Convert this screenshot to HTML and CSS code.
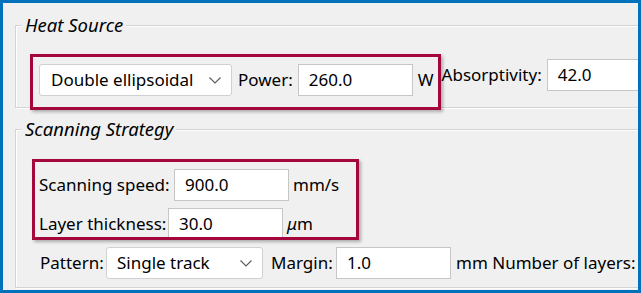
FILE: index.html
```html
<!DOCTYPE html>
<html>
<head>
<meta charset="utf-8">
<link rel="stylesheet" href="styles.css">
</head>
<body>
<div class="frame">
  <div class="group g1">
    <div class="legend">Heat Source</div>
    <div class="row">
      <div class="mark m1">
        <div class="combo c1"><span>Double ellipsoidal</span><svg class="chev" width="12" height="7" viewBox="0 0 12 7"><polyline points="0.5,0.5 6,6 11.5,0.5" fill="none" stroke="#5a5a5a" stroke-width="1.1"/></svg></div>
        <span class="lbl l-power">Power:</span>
        <div class="field f115">260.0</div>
        <span class="lbl l-w">W</span>
      </div>
      <span class="lbl l-abs">Absorptivity:</span>
      <div class="field f-abs">42.0</div>
    </div>
  </div>
  <div class="group g2">
    <div class="legend">Scanning Strategy</div>
    <div class="mark m2">
      <div class="row r-speed">
        <span class="lbl l-speed">Scanning speed:</span>
        <div class="field f115">900.0</div>
        <span class="lbl l-unit">mm/s</span>
      </div>
      <div class="row r-layer">
        <span class="lbl l-layer">Layer thickness:</span>
        <div class="field f115">30.0</div>
        <span class="lbl l-unit"><i>μ</i>m</span>
      </div>
    </div>
    <div class="row r-pattern">
      <span class="lbl l-pattern">Pattern:</span>
      <div class="combo c2"><span>Single track</span><svg class="chev" width="12" height="7" viewBox="0 0 12 7"><polyline points="0.5,0.5 6,6 11.5,0.5" fill="none" stroke="#5a5a5a" stroke-width="1.1"/></svg></div>
      <span class="lbl l-margin">Margin:</span>
      <div class="field f115">1.0</div>
      <span class="lbl l-unit2">mm Number of layers:</span>
    </div>
  </div>
</div>
</body>
</html>
```
FILE: styles.css
```css
html, body {
  margin: 0;
  padding: 0;
  background: #f0f0f0;
}
body {
  font-family: "Noto Sans", "Open Sans", sans-serif;
  font-size: 17px;
  color: #000;
}
.frame {
  box-sizing: border-box;
  width: 641px;
  height: 293px;
  border: 3px solid #0072bc;
  background: #f0f0f0;
  overflow: hidden;
}
.group {
  box-sizing: border-box;
  width: 700px;
  margin-left: 12px;
  border: 1px solid #d4d4d4;
  box-shadow: inset 1px 1px 0 #fff, 1px 1px 0 #fff;
}
.g1 {
  margin-top: 22px;
  height: 83px;
}
.g2 {
  margin-top: 21px;
  height: 159px;
}
.legend {
  display: inline-block;
  font-style: italic;
  font-size: 18.5px;
  height: 24px;
  line-height: 24px;
  margin-top: -13px;
  margin-left: 6px;
  padding: 0 3px;
  background: #f0f0f0;
  vertical-align: top;
}
.row {
  display: flex;
  align-items: flex-start;
}
.mark {
  box-sizing: border-box;
  border: 3px solid #a3073c;
  box-shadow: 2px 2px 3px rgba(0, 0, 0, 0.28);
}
.m1 {
  display: flex;
  align-items: flex-start;
  height: 56px;
  margin-top: 5px;
  margin-left: 14px;
  padding: 7px 4px 0 6px;
}
.m2 {
  width: 327px;
  height: 81px;
  margin-top: 6px;
  margin-left: 16px;
  padding: 7px 0 0 4px;
  overflow: hidden;
}
.lbl {
  height: 32px;
  line-height: 31px;
  white-space: nowrap;
  flex-shrink: 0;
}
.combo {
  box-sizing: border-box;
  height: 32px;
  display: flex;
  align-items: center;
  justify-content: space-between;
  background: #fff;
  border: 1px solid #d0d0d0;
  border-radius: 3px;
  padding: 0 10px 0 11px;
  line-height: 30px;
  flex-shrink: 0;
}
.chev {
  display: block;
  margin-top: 1px;
}
.c1 {
  width: 193px;
  margin-right: 6px;
}
.field {
  box-sizing: border-box;
  height: 32px;
  background: #fff;
  border: 1px solid #c6c6c6;
  padding-left: 10px;
  line-height: 30px;
  flex-shrink: 0;
}
.f115 {
  width: 115px;
}
.l-power {
  margin-right: 5px;
}
.m1 .f115 {
  margin-right: 5px;
}
.l-abs {
  margin-top: 10px;
  margin-left: 1px;
  margin-right: 5px;
}
.f-abs {
  margin-top: 10px;
  width: 120px;
}
.l-speed {
  width: 135px;
}
.r-layer {
  margin-top: 7px;
}
.l-layer {
  width: 129px;
}
.l-unit {
  margin-left: 4px;
}
.l-unit i {
  font-style: italic;
}
.r-pattern {
  margin-top: 7px;
  margin-left: 24px;
}
.l-pattern {
  width: 66px;
}
.c2 {
  width: 157px;
  padding-left: 10px;
  margin-right: 8px;
}
.l-margin {
  width: 65px;
}
.l-unit2 {
  margin-left: 5px;
}
```
